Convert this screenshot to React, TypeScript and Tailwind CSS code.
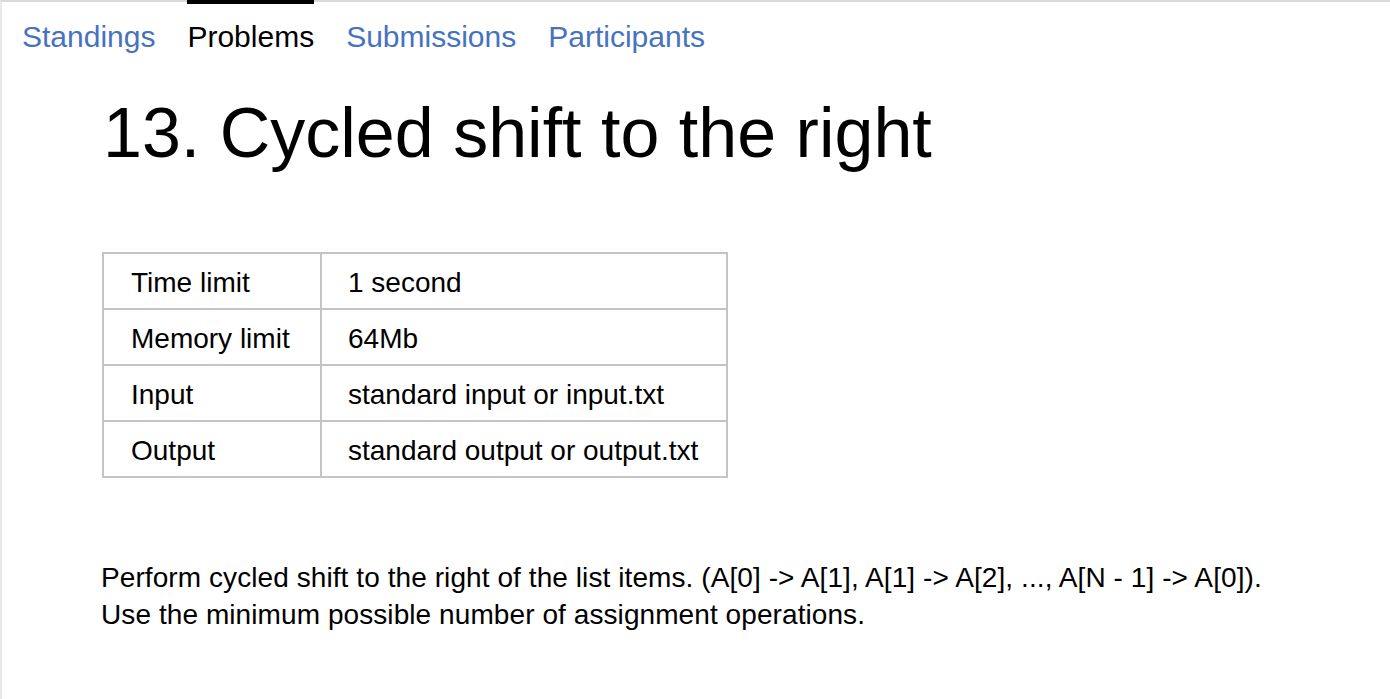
import React from 'react';

const tabs = [
  { label: 'Standings', active: false },
  { label: 'Problems', active: true },
  { label: 'Submissions', active: false },
  { label: 'Participants', active: false },
];

const limits = [
  ['Time limit', '1 second'],
  ['Memory limit', '64Mb'],
  ['Input', 'standard input or input.txt'],
  ['Output', 'standard output or output.txt'],
];

export default function App() {
  return (
    <div className="min-h-[699px] bg-white border-t-2 border-l-2 border-t-[#d9d9d9] border-l-[#e8e8e8] text-black font-['Liberation_Sans',Arial,sans-serif]">
      {/* Tabs */}
      <nav className="flex gap-[32px] pl-[20px] -mt-[2px]">
        {tabs.map((t) => (
          <a
            key={t.label}
            className={`border-t-4 pt-[15px] text-[30px] leading-[36px] ${
              t.active ? 'border-black text-black' : 'border-transparent text-[#4672bf]'
            }`}
          >
            {t.label}
          </a>
        ))}
      </nav>

      <div className="pl-[99px]">
        {/* Title */}
        <h1 className="ml-[2px] mt-[43px] text-[70px] leading-[70px] font-normal">
          13. Cycled shift to the right
        </h1>

        {/* Limits */}
        <table className="ml-[1px] mt-[84px] w-[626px] border-collapse text-[28px] leading-[36px]">
          <tbody>
            {limits.map(([k, v]) => (
              <tr key={k}>
                <td className="w-[218px] border-2 border-[#c4c4c4] pt-[11px] pb-[7px] pl-[27px]">{k}</td>
                <td className="border-2 border-[#c4c4c4] pt-[11px] pb-[7px] pl-[26px]">{v}</td>
              </tr>
            ))}
          </tbody>
        </table>

        {/* Statement */}
        <div className="mt-[81px] text-[28px] leading-[37px] tracking-[0.08px]">
          <p>
            Perform cycled shift to the right of the list items. (A[0] -&gt; A[1], A[1] -&gt; A[2], ..., A[N - 1] -&gt; A[0]).
          </p>
          <p>Use the minimum possible number of assignment operations.</p>
        </div>
      </div>
    </div>
  );
}
